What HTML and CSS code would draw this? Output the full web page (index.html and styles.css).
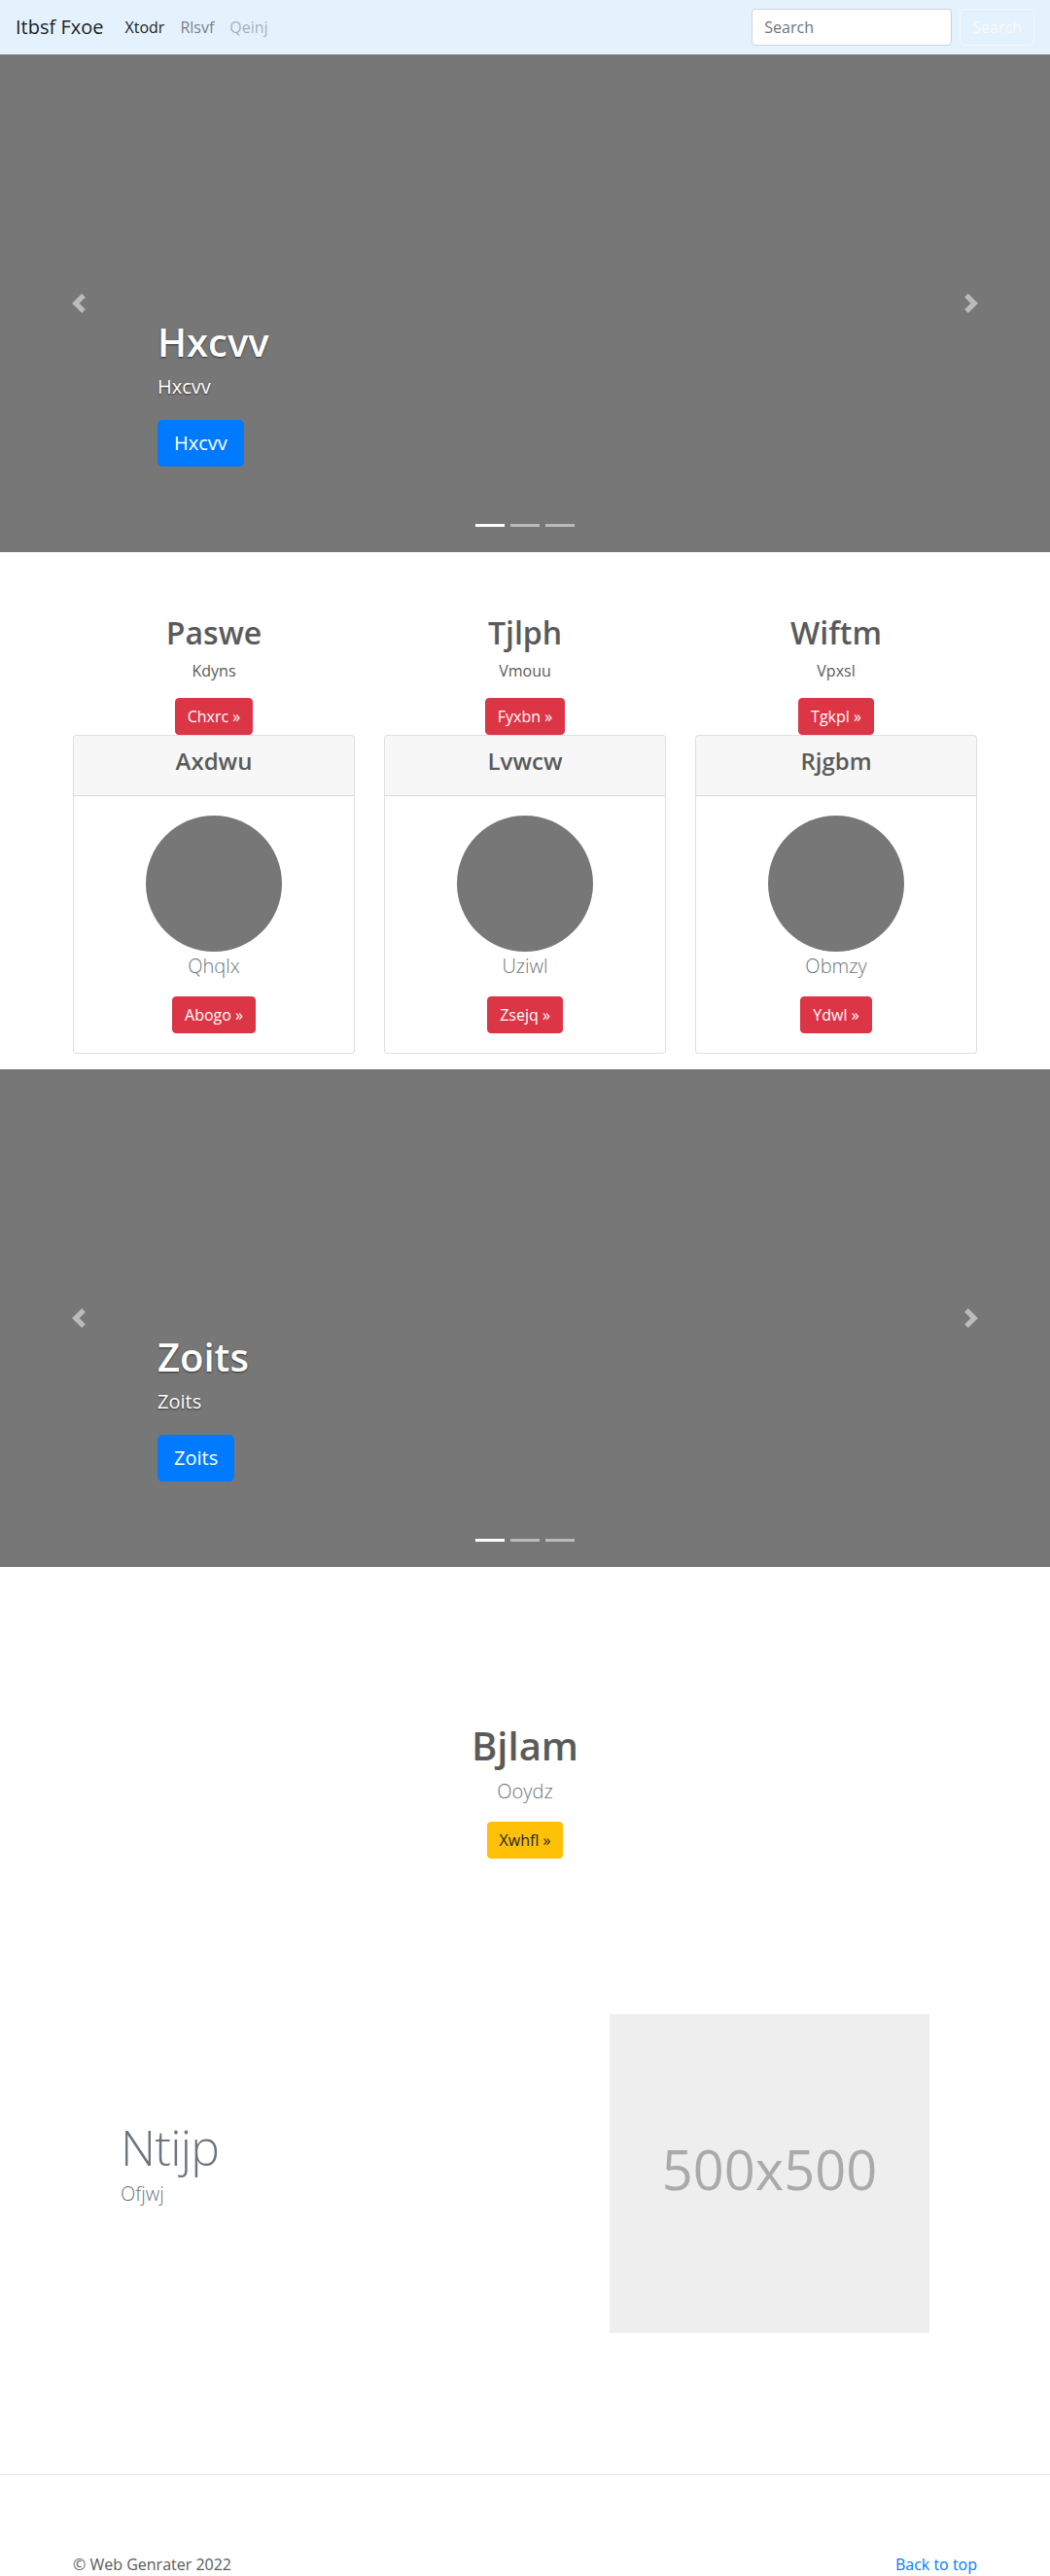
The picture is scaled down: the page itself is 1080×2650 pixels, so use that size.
FILE: index.html
```html
<!DOCTYPE html>
<html lang="en">
<head>
<meta charset="utf-8">
<title>Itbsf Fxoe</title>
<link rel="stylesheet" href="styles.css">
</head>
<body>
<nav class="navbar">
  <a class="brand" href="#">Itbsf Fxoe</a>
  <ul class="nav">
    <li><a class="nav-link active" href="#">Xtodr</a></li>
    <li><a class="nav-link" href="#">Rlsvf</a></li>
    <li><a class="nav-link disabled" href="#">Qeinj</a></li>
  </ul>
  <form class="search">
    <input class="search-input" type="text" placeholder="Search">
    <button class="btn btn-outline-light" type="button">Search</button>
  </form>
</nav>

<div class="carousel">
  <div class="carousel-item">
    <div class="caption">
      <h1 class="caption-title">Hxcvv</h1>
      <p class="caption-text">Hxcvv</p>
      <p class="caption-action"><a class="btn btn-lg btn-primary" href="#">Hxcvv</a></p>
    </div>
  </div>
  <ol class="indicators"><li class="active"></li><li></li><li></li></ol>
  <a class="control control-prev" href="#"><svg class="control-icon" viewBox="0 0 8 8"><path fill="#fff" d="M5.25 0l-4 4 4 4 1.5-1.5L4.25 4l2.5-2.5L5.25 0z"/></svg></a>
  <a class="control control-next" href="#"><svg class="control-icon" viewBox="0 0 8 8"><path fill="#fff" d="M2.75 0l-1.5 1.5L3.75 4l-2.5 2.5L2.75 8l4-4-4-4z"/></svg></a>
</div>

<div class="container marketing">
  <div class="col">
    <h2 class="col-title">Paswe</h2>
    <p class="col-text">Kdyns</p>
    <p class="action"><a class="btn btn-danger" href="#">Chxrc &raquo;</a></p>
    <div class="card">
      <div class="card-header"><h4 class="card-title">Axdwu</h4></div>
      <div class="card-body">
        <div class="circle"></div>
        <p class="lead muted">Qhqlx</p>
        <p class="action"><a class="btn btn-danger" href="#">Abogo &raquo;</a></p>
      </div>
    </div>
  </div>
  <div class="col">
    <h2 class="col-title">Tjlph</h2>
    <p class="col-text">Vmouu</p>
    <p class="action"><a class="btn btn-danger" href="#">Fyxbn &raquo;</a></p>
    <div class="card">
      <div class="card-header"><h4 class="card-title">Lvwcw</h4></div>
      <div class="card-body">
        <div class="circle"></div>
        <p class="lead muted">Uziwl</p>
        <p class="action"><a class="btn btn-danger" href="#">Zsejq &raquo;</a></p>
      </div>
    </div>
  </div>
  <div class="col">
    <h2 class="col-title">Wiftm</h2>
    <p class="col-text">Vpxsl</p>
    <p class="action"><a class="btn btn-danger" href="#">Tgkpl &raquo;</a></p>
    <div class="card">
      <div class="card-header"><h4 class="card-title">Rjgbm</h4></div>
      <div class="card-body">
        <div class="circle"></div>
        <p class="lead muted">Obmzy</p>
        <p class="action"><a class="btn btn-danger" href="#">Ydwl &raquo;</a></p>
      </div>
    </div>
  </div>
</div>

<div class="carousel">
  <div class="carousel-item">
    <div class="caption">
      <h1 class="caption-title">Zoits</h1>
      <p class="caption-text">Zoits</p>
      <p class="caption-action"><a class="btn btn-lg btn-primary" href="#">Zoits</a></p>
    </div>
  </div>
  <ol class="indicators"><li class="active"></li><li></li><li></li></ol>
  <a class="control control-prev" href="#"><svg class="control-icon" viewBox="0 0 8 8"><path fill="#fff" d="M5.25 0l-4 4 4 4 1.5-1.5L4.25 4l2.5-2.5L5.25 0z"/></svg></a>
  <a class="control control-next" href="#"><svg class="control-icon" viewBox="0 0 8 8"><path fill="#fff" d="M2.75 0l-1.5 1.5L3.75 4l-2.5 2.5L2.75 8l4-4-4-4z"/></svg></a>
</div>

<section class="jumbotron">
  <h1 class="jumbotron-heading">Bjlam</h1>
  <p class="lead muted">Ooydz</p>
  <p class="action"><a class="btn btn-warning" href="#">Xwhfl &raquo;</a></p>
</section>

<div class="container featurette">
  <div class="featurette-text">
    <h2 class="featurette-heading">Ntijp</h2>
    <p class="lead featurette-lead">Ofjwj</p>
  </div>
  <svg class="placeholder" width="329" height="328" viewBox="0 0 329 328">
    <rect width="329" height="328" fill="#eee"/>
    <text class="placeholder-text" x="50%" y="50%" dy=".3em" text-anchor="middle" fill="#aaa">500x500</text>
  </svg>
</div>

<hr class="divider">

<footer class="container footer">
  <p class="footer-text">&copy; Web Genrater 2022</p>
  <p class="footer-text"><a class="footer-link" href="#">Back to top</a></p>
</footer>
</body>
</html>
```

FILE: styles.css
```css
* { box-sizing: border-box; }

body {
  margin: 0;
  font-family: "Open Sans", "Noto Sans", "Liberation Sans", sans-serif;
  font-size: 16px;
  line-height: 1.5;
  color: #5a5a5a;
  background: #fff;
}

h1, h2, h4 { margin: 0 0 8px; font-weight: 600; line-height: 1.2; }
p { margin: 0 0 16px; }
a { text-decoration: none; }

/* Navbar */
.navbar {
  display: flex;
  align-items: center;
  height: 56px;
  padding: 8px 16px;
  background: #e3f2fd;
}
.brand {
  font-size: 20px;
  line-height: 30px;
  padding: 5px 0;
  margin-right: 14px;
  color: rgba(0,0,0,.9);
}
.nav {
  display: flex;
  list-style: none;
  margin: 0;
  padding: 0;
}
.nav-link {
  display: block;
  padding: 8px;
  color: rgba(0,0,0,.5);
}
.nav-link.active { color: rgba(0,0,0,.9); }
.nav-link.disabled { color: rgba(0,0,0,.3); }
.search {
  margin-left: auto;
  display: flex;
  align-items: center;
  gap: 8px;
}
.search-input {
  width: 206px;
  height: 38px;
  padding: 6px 12px;
  font: inherit;
  font-size: 16px;
  color: #495057;
  background: #fff;
  border: 1px solid #ced4da;
  border-radius: 4px;
}
.search-input::placeholder { color: #6c757d; }

/* Buttons */
.btn {
  display: inline-block;
  font: inherit;
  font-size: 16px;
  line-height: 1.5;
  padding: 6px 12px;
  border: 1px solid transparent;
  border-radius: 4px;
  text-align: center;
  cursor: pointer;
}
.btn-lg { font-size: 20px; padding: 8px 16px; border-radius: 4.8px; }
.btn-primary { background: #007bff; border-color: #007bff; color: #fff; }
.btn-danger { background: #dc3545; border-color: #dc3545; color: #fff; }
.btn-warning { background: #ffc107; border-color: #ffc107; color: #212529; }
.btn-outline-light { background: transparent; border-color: #f8f9fa; color: #f8f9fa; }

/* Carousel */
.carousel {
  position: relative;
  background: #777;
  margin-bottom: 64px;
}
.carousel-item {
  height: 512px;
  display: flex;
  flex-direction: column;
  justify-content: flex-end;
  padding: 0 15% 48px;
}
.caption {
  padding: 20px 0;
  color: #fff;
  text-shadow: 0 1px 2px rgba(0,0,0,.6);
}
.caption-title { font-size: 40px; color: #fff; }
.caption-text { font-size: 20px; line-height: 1.4; margin-bottom: 20px; }
.caption-action { font-size: 20px; line-height: 1.4; margin: 0 0 20px; }
.caption-action .btn { text-shadow: none; }
.indicators {
  position: absolute;
  left: 0;
  right: 0;
  bottom: 0;
  display: flex;
  justify-content: center;
  list-style: none;
  padding: 0;
  margin: 0 15% 16px;
}
.indicators li {
  width: 30px;
  height: 23px;
  margin: 0 3px;
  border-top: 10px solid transparent;
  border-bottom: 10px solid transparent;
  background: #fff;
  background-clip: padding-box;
  opacity: .5;
}
.indicators li.active { opacity: 1; }
.control {
  position: absolute;
  top: 0;
  bottom: 0;
  width: 15%;
  display: flex;
  align-items: center;
  justify-content: center;
  opacity: .5;
}
.control-prev { left: 0; }
.control-next { right: 0; }
.control-icon { width: 20px; height: 20px; display: block; }

/* Marketing */
.container {
  width: 960px;
  margin: 0 auto;
}
.marketing {
  display: flex;
  padding: 0;
}
.col {
  flex: 1 1 0;
  padding: 0 15px;
  text-align: center;
}
.col-title { font-size: 32px; }
.col-text { margin: 0 12px 16px; }
.action {
  display: flex;
  justify-content: center;
  margin: 0;
}
.card {
  margin-bottom: 16px;
  border: 1px solid rgba(0,0,0,.125);
  border-radius: 4px;
  background: #fff;
  overflow: hidden;
}
.card-header {
  padding: 12px 20px;
  background: rgba(0,0,0,.03);
  border-bottom: 1px solid rgba(0,0,0,.125);
}
.card-title { font-size: 24px; }
.card-body { padding: 20px; }
.circle {
  width: 140px;
  height: 140px;
  margin: 0 auto;
  border-radius: 50%;
  background: #777;
}
.lead { font-size: 20px; font-weight: 300; }
.muted { color: #6c757d; }

/* Jumbotron */
.jumbotron {
  padding: 96px 0 160px;
  text-align: center;
}
.jumbotron-heading { font-size: 40px; }

/* Featurette */
.featurette {
  display: flex;
  justify-content: space-between;
  align-items: flex-start;
  padding: 0 64px;
}
.featurette-heading {
  margin-top: 112px;
  font-size: 50px;
  font-weight: 300;
  line-height: 1;
  letter-spacing: -.8px;
  color: #6c757d;
}
.featurette-lead { color: #6c757d; }
.placeholder { display: block; }
.placeholder-text {
  font-family: "Open Sans", "Noto Sans", "Liberation Sans", sans-serif;
  font-size: 56px;
}

.divider {
  margin: 145px 0 80px;
  border: 0;
  border-top: 1px solid rgba(0,0,0,.1);
  height: 0;
}

/* Footer */
.footer {
  display: flex;
  justify-content: space-between;
  padding: 0 15px;
}
.footer-link { color: #007bff; }
```
